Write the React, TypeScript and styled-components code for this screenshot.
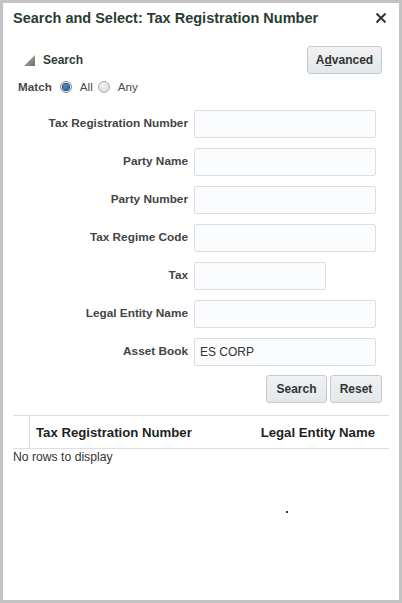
import React from "react";
import styled, { createGlobalStyle } from "styled-components";

const Global = createGlobalStyle`
  html, body { margin: 0; padding: 0; background: #ffffff; }
  * { box-sizing: border-box; }
`;

const Dialog = styled.div`
  width: 402px;
  height: 603px;
  border: 3px solid #c3c3c3;
  background: #ffffff;
  font-family: "Liberation Sans", Arial, sans-serif;
  display: flex;
  flex-direction: column;
  position: relative;
`;

const TitleBar = styled.div`
  height: 30px;
  display: flex;
  align-items: center;
  justify-content: space-between;
  padding: 0 13px 0 10px;
`;

const Title = styled.h1`
  margin: 0;
  font-size: 14.5px;
  font-weight: bold;
  color: #283c30;
`;

const Close = styled.button`
  border: none;
  background: none;
  padding: 0;
  width: 10px;
  height: 10px;
  display: flex;
  align-items: center;
  justify-content: center;
  cursor: pointer;
`;

const SearchHeader = styled.div`
  margin-top: 13px;
  height: 28px;
  display: flex;
  align-items: center;
  justify-content: space-between;
  padding: 0 17px 0 21px;
`;

const Disclosure = styled.div`
  display: flex;
  align-items: center;
  gap: 8px;
  font-size: 12px;
  font-weight: bold;
  color: #2f3d36;
`;

const Button = styled.button<{ $w: number }>`
  width: ${(p) => p.$w}px;
  height: 28px;
  border: 1px solid #c6cacf;
  border-radius: 3px;
  background: linear-gradient(#f0f2f4, #e3e7ea);
  font-family: "Liberation Sans", Arial, sans-serif;
  font-size: 12px;
  font-weight: bold;
  color: #333333;
  padding: 0;
  cursor: pointer;
  u { text-decoration: underline; }
`;

const MatchRow = styled.div`
  margin-top: 5px;
  height: 16px;
  display: flex;
  align-items: center;
  padding-left: 15px;
  font-size: 11.7px;
  color: #4a4a4a;
  line-height: 1;
`;

const MatchLabel = styled.span`
  font-weight: bold;
  margin-right: 8px;
`;

const Radio = styled.span<{ $on?: boolean }>`
  width: 12px;
  height: 12px;
  border-radius: 50%;
  border: 1px solid ${(p) => (p.$on ? "#7d8790" : "#a9adb1")};
  background: ${(p) => (p.$on ? "radial-gradient(circle, #ffffff 55%, #dfe3e6)" : "radial-gradient(circle at 40% 35%, #f4f4f4, #d2d4d6)")};
  display: inline-flex;
  align-items: center;
  justify-content: center;
  margin-right: 8px;
  &::after {
    content: "";
    display: ${(p) => (p.$on ? "block" : "none")};
    width: 6px;
    height: 6px;
    border-radius: 50%;
    background: radial-gradient(circle at 40% 35%, #4f8fd0, #1d4f8a);
    box-shadow: 0 0 0 1px #15365e;
  }
`;

const RadioText = styled.span`
  margin-right: 5px;
`;

const Form = styled.div`
  margin-top: 15px;
  display: grid;
  grid-template-columns: 185px 1fr;
  column-gap: 6px;
  row-gap: 10px;
  grid-auto-rows: 28px;
`;

const Label = styled.label`
  display: flex;
  align-items: center;
  justify-content: flex-end;
  padding-bottom: 2px;
  font-size: 11.8px;
  font-weight: bold;
  color: #444444;
`;

const Input = styled.input<{ $w: number }>`
  width: ${(p) => p.$w}px;
  height: 28px;
  border: 1px solid #dbdfe3;
  border-radius: 2px;
  background: #fbfcfd;
  font-family: "Liberation Sans", Arial, sans-serif;
  font-size: 12px;
  color: #333333;
  padding: 0 5px;
  outline: none;
`;

const ButtonRow = styled.div`
  margin-top: 9px;
  display: flex;
  justify-content: flex-end;
  gap: 3px;
  padding-right: 17px;
`;

const Table = styled.div`
  margin: 12px 10px 0;
  position: relative;
  flex: 1;
`;

const HeaderRow = styled.div`
  display: flex;
  height: 34px;
  border-top: 1px solid #dcdfe2;
  border-bottom: 1px solid #dcdfe2;
`;

const SelectCell = styled.div`
  width: 17px;
  border-right: 1px solid #dcdfe2;
`;

const HeaderCell = styled.div<{ $right?: boolean }>`
  flex: ${(p) => (p.$right ? "none" : "1")};
  display: flex;
  align-items: center;
  padding: ${(p) => (p.$right ? "0 14px 0 0" : "0 0 0 6px")};
  font-size: 13.2px;
  font-weight: bold;
  color: #1f1f1f;
`;

const Empty = styled.div`
  height: 16px;
  display: flex;
  align-items: center;
  font-size: 12.2px;
  color: #333333;
`;

const Dot = styled.span`
  position: absolute;
  left: 273px;
  top: 96px;
  width: 2px;
  height: 2px;
  background: #333333;
`;

const fields: { label: string; w: number; value?: string }[] = [
  { label: "Tax Registration Number", w: 182 },
  { label: "Party Name", w: 182 },
  { label: "Party Number", w: 182 },
  { label: "Tax Regime Code", w: 182 },
  { label: "Tax", w: 132 },
  { label: "Legal Entity Name", w: 182 },
  { label: "Asset Book", w: 182, value: "ES CORP" },
];

export default function App() {
  return (
    <>
      <Global />
      <Dialog>
        <TitleBar>
          <Title>Search and Select: Tax Registration Number</Title>
          <Close aria-label="Close">
            <svg width="10" height="10" viewBox="0 0 10 10">
              <path d="M1.2 1.2 L8.8 8.8 M8.8 1.2 L1.2 8.8" stroke="#333" strokeWidth="2" strokeLinecap="square" />
            </svg>
          </Close>
        </TitleBar>
        <SearchHeader>
          <Disclosure>
            <svg width="11" height="11" viewBox="0 0 11 11">
              <defs>
                <linearGradient id="tri" x1="0" y1="0" x2="1" y2="1">
                  <stop offset="0" stopColor="#b4b4b4" />
                  <stop offset="1" stopColor="#6f6f6f" />
                </linearGradient>
              </defs>
              <path d="M11 0 L11 11 L0 11 Z" fill="url(#tri)" />
            </svg>
            <span>Search</span>
          </Disclosure>
          <Button $w={75}>
            A<u>d</u>vanced
          </Button>
        </SearchHeader>
        <MatchRow>
          <MatchLabel>Match</MatchLabel>
          <Radio $on />
          <RadioText>All</RadioText>
          <Radio />
          <RadioText>Any</RadioText>
        </MatchRow>
        <Form>
          {fields.map((f) => (
            <React.Fragment key={f.label}>
              <Label>{f.label}</Label>
              <Input $w={f.w} defaultValue={f.value ?? ""} />
            </React.Fragment>
          ))}
        </Form>
        <ButtonRow>
          <Button $w={61}>Search</Button>
          <Button $w={52}>Reset</Button>
        </ButtonRow>
        <Table>
          <HeaderRow>
            <SelectCell />
            <HeaderCell>Tax Registration Number</HeaderCell>
            <HeaderCell $right>Legal Entity Name</HeaderCell>
          </HeaderRow>
          <Empty>No rows to display</Empty>
          <Dot />
        </Table>
      </Dialog>
    </>
  );
}
